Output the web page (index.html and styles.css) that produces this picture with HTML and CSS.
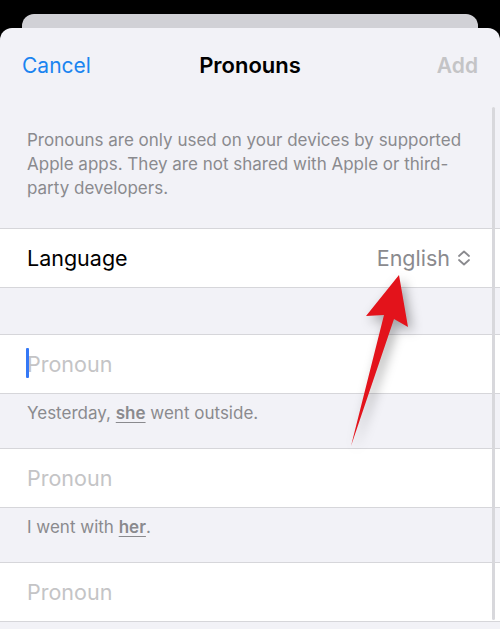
FILE: index.html
```html
<!DOCTYPE html>
<html lang="en">
<head>
    <meta charset="UTF-8">
    <meta name="viewport" content="width=device-width, initial-scale=1.0">
    <title>Pronouns</title>
    <link rel="stylesheet" href="styles.css">
</head>
<body>

    <div class="back-card"></div>
    <div class="sheet">
        <div class="nav">
            <span class="nav-btn cancel">Cancel</span>
            <span class="nav-title">Pronouns</span>
            <span class="nav-btn add">Add</span>
        </div>

        <p class="note">Pronouns are only used on your devices by supported Apple apps. They are not shared with Apple or third-party developers.</p>

        <div class="row">
            <span class="row-label">Language</span>
            <span class="row-value">English
                <svg class="updown" width="14" height="16" viewBox="0 0 14 16">
                    <path d="M2 6 L7 1.5 L12 6 M2 10 L7 14.5 L12 10" fill="none" stroke="#8a8a8e" stroke-width="1.8" stroke-linecap="round" stroke-linejoin="round"/>
                </svg>
            </span>
        </div>

        <div class="spacer"></div>

        <div class="row field"><span class="caret"></span><span class="placeholder">Pronoun</span></div>
        <div class="hint">Yesterday, <b>she</b> went outside.</div>

        <div class="row field"><span class="placeholder">Pronoun</span></div>
        <div class="hint">I went with <b>her</b>.</div>

        <div class="row field"><span class="placeholder">Pronoun</span></div>

        <div class="scrollbar"></div>
    </div>

    <!-- callout arrow pointing at the language picker -->
    <svg class="callout" width="500" height="629" viewBox="0 0 500 629">
        <path d="M399 275 L408 327 L394 319 L351 446 L384 315 L366 316 Z" fill="#e3131b"/>
    </svg>

</body>
</html>
```

FILE: styles.css
```css
body {
    margin: 0;
    background: #000;
    font-family: Inter, "Noto Sans", sans-serif;
    height: 629px;
    overflow: hidden;
    position: relative;
}
.back-card {
    height: 14px;
    margin: 14px 22px 0;
    background: #d1d1d6;
    border-radius: 12px 12px 0 0;
}
.sheet {
    position: relative;
    background: #f2f2f7;
    border-radius: 12px 12px 0 0;
    height: 601px;
}
.nav {
    height: 74px;
    display: flex;
    align-items: center;
    justify-content: space-between;
    padding: 0 22px;
    position: relative;
}
.nav-btn {
    font-size: 21px;
}
.cancel {
    color: #1a84f0;
}
.add {
    color: #c4c4c6;
    font-weight: 600;
}
.nav-title {
    position: absolute;
    left: 0;
    right: 0;
    text-align: center;
    font-size: 22px;
    font-weight: 600;
    color: #000;
    pointer-events: none;
}
.note {
    margin: 0;
    padding: 26px 30px 28px 27px;
    font-size: 17px;
    line-height: 24px;
    color: #8a8a8e;
}
.row {
    background: #fff;
    border-top: 1px solid #d6d6da;
    border-bottom: 1px solid #d6d6da;
    height: 58px;
    display: flex;
    align-items: center;
    padding: 0 29px 0 27px;
    font-size: 21.5px;
}
.row-label {
    flex: 1;
    color: #000;
}
.row-value {
    color: #8a8a8e;
    display: flex;
    align-items: center;
    gap: 7px;
}
.spacer {
    height: 46px;
}
.field {
    position: relative;
}
.caret {
    position: absolute;
    left: 26px;
    top: 13px;
    width: 2.5px;
    height: 30px;
    background: #3478f6;
    border-radius: 1px;
}
.placeholder {
    color: #c4c4c6;
}
.hint {
    height: 54px;
    box-sizing: border-box;
    padding: 8px 27px 0;
    font-size: 17px;
    line-height: 22px;
    color: #8a8a8e;
}
.hint b {
    font-weight: 600;
    text-decoration: underline;
    text-underline-offset: 3px;
}
.scrollbar {
    position: absolute;
    right: 5px;
    top: 79px;
    bottom: 9px;
    width: 3px;
    background: #d8d8dc;
    border-radius: 2px;
}
.callout {
    position: absolute;
    left: 0;
    top: 0;
    filter: drop-shadow(4px 5px 6px rgba(0, 0, 0, 0.35));
}
```
